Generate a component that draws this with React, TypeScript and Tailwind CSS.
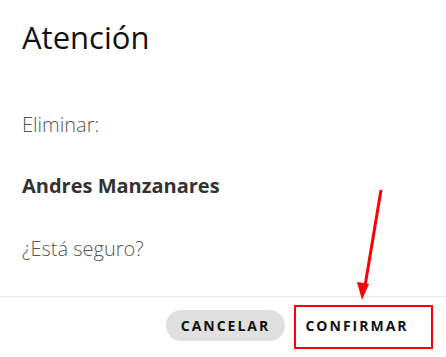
import React from "react";

export default function App() {
  return (
    <div className="relative flex h-[357px] w-[446px] flex-col overflow-hidden bg-white font-['Open_Sans',sans-serif]">
      <div className="px-[22px] pt-[17px]">
        <h2 className="text-[31px] leading-[41px] font-normal text-[#111]">Atención</h2>
      </div>
      <div className="flex-1 px-[22px] pt-[55px] text-[20px] leading-[24px] font-light text-[#555]">
        <p>Eliminar:</p>
        <p className="mt-[37px] font-bold text-[#333]">Andres Manzanares</p>
        <p className="mt-[39px]">¿Está seguro?</p>
      </div>
      <div className="flex h-[61px] justify-end gap-[12px] border-t border-[#e6e6e6] pt-[13px] pr-[29px]">
        <button className="h-[31px] w-[119px] rounded-full bg-[#e0e0e0] text-[14px] font-bold tracking-[2px] text-[#111]">
          CANCELAR
        </button>
        <button className="h-[31px] w-[120px] text-[14px] font-bold tracking-[2px] text-[#111]">
          CONFIRMAR
        </button>
      </div>
      {/* annotation overlay */}
      <div className="absolute left-[294px] top-[305px] h-[44px] w-[139px] border-2 border-[#ff0000]" />
      <svg className="absolute left-0 top-0" width="446" height="357" viewBox="0 0 446 357">
        <line x1="381" y1="190" x2="365" y2="286" stroke="#ff0000" strokeWidth="3" />
        <polygon points="357,282 369,284 362,300" fill="#ff0000" />
      </svg>
    </div>
  );
}
